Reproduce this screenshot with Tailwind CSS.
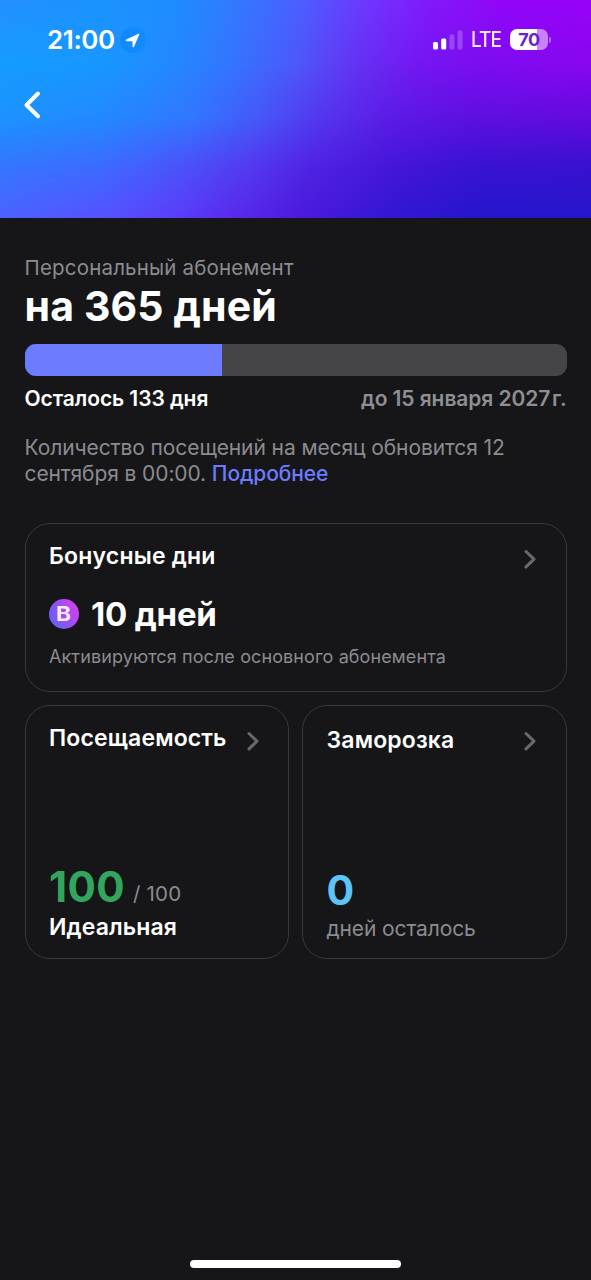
<!DOCTYPE html>
<html lang="ru">
<head>
<meta charset="utf-8">
<meta name="viewport" content="width=device-width, initial-scale=1">
<title>Абонемент</title>
<script src="https://cdn.jsdelivr.net/npm/@tailwindcss/browser@4"></script>
</head>
<body class="bg-[#161618] font-['Inter','Liberation_Sans',sans-serif] text-white">
<div class="flex h-[1280px] w-[591px] flex-col overflow-hidden">
  <header class="relative isolate h-[218px] shrink-0 overflow-hidden">
    <!-- colour mesh: horizontal ramps blended vertically -->
    <div class="absolute inset-0 -z-10 bg-[linear-gradient(to_right,#2590ff_0px,#1b93ff_100px,#1f8cff_180px,#3478ff_240px,#4b5fff_300px,#7035ff_370px,#8319fb_430px,#9206f8_500px,#9803f8_591px)]"></div>
    <div class="absolute inset-0 -z-10 bg-[linear-gradient(to_right,#149cff_0px,#1897ff_100px,#2389ff_170px,#3375ff_230px,#4f56f8_300px,#6530f3_360px,#7416f1_420px,#7c0df0_480px,#8806ee_591px)] mask-[linear-gradient(to_bottom,transparent_0px,black_65px)]"></div>
    <div class="absolute inset-0 -z-10 bg-[linear-gradient(to_right,#1c92ff_0px,#2389ff_100px,#3177ff_190px,#4657f8_260px,#5436ee_320px,#5c1be6_390px,#5d10e0_470px,#640adf_591px)] mask-[linear-gradient(to_bottom,transparent_65px,black_118px)]"></div>
    <div class="absolute inset-0 -z-10 bg-[linear-gradient(to_right,#3377ff_0px,#3c6cff_100px,#4a54fa_180px,#533af0_250px,#5024e4_310px,#4616da_390px,#3a13d4_470px,#3911d0_591px)] mask-[linear-gradient(to_bottom,transparent_118px,black_165px)]"></div>
    <div class="absolute inset-0 -z-10 bg-[linear-gradient(to_right,#4d62ff_0px,#5650ff_110px,#5a3cf8_180px,#5928ea_240px,#4c1adc_300px,#3017d0_400px,#2516cb_480px,#2617cc_591px)] mask-[linear-gradient(to_bottom,transparent_165px,black_218px)]"></div>

    <div class="flex h-[79px] items-center pr-[40px] pl-[47px]">
      <span class="w-[68px] text-[26px] leading-8 font-semibold tracking-[-0.4px]">21:00</span>
      <span class="ml-[5px] flex size-[26px] items-center justify-center rounded-full bg-[#118afd]">
        <svg class="size-[26px]" viewBox="0 0 26 26" fill="white"><path d="M19.300 7.500 14 19.800q-1 1.400-1.500-.2V14.200H6.600q-2-.4-.3-1.600L18.500 6.700q1.100-.3.8.8Z"/></svg>
      </span>
      <div class="ml-auto flex items-center">
        <svg class="h-[20px] w-[31px]" viewBox="0 0 31 20" fill="white"><rect x="1" y="12" width="5" height="7.500" rx="1.500"/><rect x="9.200" y="8.500" width="5" height="11" rx="1.500"/><rect x="17.400" y="4.500" width="5" height="15" rx="1.500" opacity=".22"/><rect x="25.600" y=".5" width="5" height="19" rx="1.500" opacity=".22"/></svg>
        <span class="ml-[8px] w-[32px] origin-left scale-x-[0.9] pt-px text-[21px] leading-6 font-medium tracking-[-0.9px] text-[#fde8ff]">LTE</span>
        <span class="ml-[7px] flex h-[21px] w-[38px] items-center justify-center rounded-[7px] bg-[linear-gradient(to_right,white_27px,#c982fc_27px)] text-[18px] leading-5 font-bold tracking-[-0.3px] text-[#6a22cf]">70</span>
        <span class="ml-[1px] h-[6px] w-[2px] rounded-r-full bg-[#c16afa]"></span>
      </div>
    </div>
    <svg class="mt-[11px] ml-[22px] h-[30px] w-[20px]" viewBox="0 0 20 30" fill="none" stroke="white" stroke-width="4" stroke-linecap="round" stroke-linejoin="round"><path d="M16 3.500 4.500 15l11.500 11.300"/></svg>
  </header>

  <main class="flex flex-col px-[24.500px] pt-[36px]">
    <p class="h-[27px] text-[20.500px] leading-[27px] tracking-[0.180px] text-[#8b8b90]">Персональный абонемент</p>
    <h1 class="h-[50px] text-[41px] leading-[50px] font-bold tracking-[0.130px] whitespace-nowrap">на 365 дней</h1>
    <div class="mt-[13px] h-[32px] overflow-hidden rounded-[11px] bg-[#454547]">
      <div class="h-full w-[197px] bg-[#6c7bff]"></div>
    </div>
    <div class="mt-[9px] flex h-[27px] justify-between text-[21px] leading-[27px] font-semibold tracking-[-0.080px] whitespace-nowrap">
      <span>Осталось 133 дня</span>
      <span class="text-[#8e8e93]">до 15 января 2027&#8202;г.</span>
    </div>
    <p class="mt-[23px] text-[21px] leading-[26px] tracking-[-0.100px] text-[#8b8b90]"><span class="whitespace-nowrap">Количество посещений на месяц обновится 12</span><br>сентября в 00:00. <a class="font-medium text-[#6c7bff]">Подробнее</a></p>

    <section class="mt-[36px] flex h-[169px] flex-col rounded-[25px] border border-[#39393b] px-[23.500px]">
      <div class="mt-[17px] flex h-[30px] items-center justify-between">
        <h2 class="text-[23px] leading-[30px] font-semibold tracking-[0.200px]">Бонусные дни</h2>
        <svg class="mt-[6px] mr-[5px] h-[20px] w-[14px]" viewBox="0 0 14 20" fill="none" stroke="#69696d" stroke-width="3" stroke-linecap="round" stroke-linejoin="round"><path d="m3 2.500 8 7.700-8 7.700"/></svg>
      </div>
      <div class="mt-[23px] flex h-[40px] items-center">
        <span class="flex size-[30px] items-center justify-center rounded-full bg-[linear-gradient(60deg,#5f62f8_10%,#9a50f2_50%,#d93df0_90%)] text-[20px] font-bold text-[#fbe9ff]"><span class="scale-x-[1.150]">B</span></span>
        <span class="ml-[12px] text-[33px] leading-[40px] font-bold tracking-[-0.200px] whitespace-nowrap">10 дней</span>
      </div>
      <p class="mt-[11px] text-[18px] leading-[24px] tracking-[0.100px] whitespace-nowrap text-[#8b8b90]">Активируются после основного абонемента</p>
    </section>

    <div class="mt-[13px] grid h-[254px] grid-cols-2 gap-[13px]">
      <section class="flex flex-col rounded-[25px] border border-[#39393b] px-[23.500px]">
        <div class="mt-[17px] flex h-[30px] items-center justify-between">
          <h2 class="text-[23px] leading-[30px] font-semibold tracking-[0.150px]">Посещаемость</h2>
          <svg class="mt-[5px] mr-[5px] h-[20px] w-[14px] shrink-0" viewBox="0 0 14 20" fill="none" stroke="#69696d" stroke-width="3" stroke-linecap="round" stroke-linejoin="round"><path d="m3 2.500 8 7.700-8 7.700"/></svg>
        </div>
        <div class="mt-[109px] flex h-[50px] items-baseline leading-[50px]">
          <span class="text-[42px] font-bold tracking-[0.400px] text-[#32a65d]">100</span>
          <span class="relative -top-px ml-[8px] text-[20.500px] tracking-[0.200px] text-[#8b8b90]">/ 100</span>
        </div>
        <p class="text-[23px] leading-[30px] font-semibold tracking-[0.120px]">Идеальная</p>
      </section>
      <section class="flex flex-col rounded-[25px] border border-[#39393b] px-[23.500px]">
        <div class="mt-[19px] flex h-[30px] items-center justify-between">
          <h2 class="text-[23px] leading-[30px] font-semibold tracking-[0.150px]">Заморозка</h2>
          <svg class="mt-[1px] mr-[5px] h-[20px] w-[14px] shrink-0" viewBox="0 0 14 20" fill="none" stroke="#69696d" stroke-width="3" stroke-linecap="round" stroke-linejoin="round"><path d="m3 2.500 8 7.700-8 7.700"/></svg>
        </div>
        <span class="mt-[110px] h-[50px] text-[41px] leading-[50px] font-bold text-[#5cc4f6]">0</span>
        <p class="-mt-[1px] text-[21px] leading-[30px] tracking-[-0.120px] text-[#8b8b90]">дней осталось</p>
      </section>
    </div>
  </main>
  <div class="mx-auto mt-auto mb-[12px] h-[8px] w-[211px] rounded-full bg-white"></div>
</div>
</body>
</html>
